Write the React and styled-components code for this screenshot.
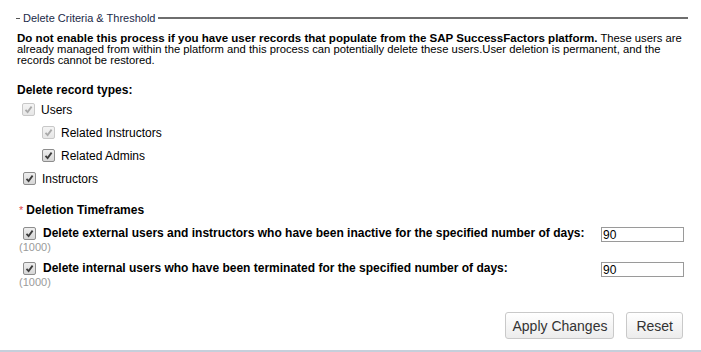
import styled, { createGlobalStyle } from "styled-components";

const Global = createGlobalStyle`
  html, body {
    margin: 0;
    padding: 0;
    background: #fff;
  }
  body {
    font-family: "Liberation Sans", Arial, sans-serif;
    font-size: 12px;
    color: #000;
  }
`;

const Page = styled.div`
  width: 701px;
  height: 352px;
  box-sizing: border-box;
  border-bottom: 2px solid #c6cfdb;
  display: flex;
  flex-direction: column;
`;

const Header = styled.div`
  display: flex;
  align-items: center;
  margin: 11px 13px 0 16px;
  height: 14px;
`;

const Dash = styled.span`
  width: 4px;
  height: 1px;
  background: #555;
`;

const Legend = styled.span`
  padding: 0 3px;
  font-size: 11px;
  color: #1b2a48;
`;

const Rule = styled.span`
  flex: 1;
  height: 2px;
  background: #6e6e6e;
`;

const Body = styled.div`
  padding: 8px 12px 0 17px;
  display: flex;
  flex-direction: column;
`;

const Intro = styled.p`
  margin: 0;
  font-size: 11.25px;
  line-height: 11px;
  b {
    font-weight: bold;
    font-size: 11.55px;
  }
`;

const SectionTitle = styled.div`
  margin-top: ${(p) => p.top}px;
  margin-bottom: ${(p) => p.bottom || 0}px;
  font-weight: bold;
  font-size: 12px;
  line-height: 14px;
  .req {
    color: #e0454a;
    font-weight: normal;
    font-size: 11px;
    margin-right: 3px;
    margin-left: 2px;
  }
`;

const CheckRow = styled.label`
  display: flex;
  align-items: center;
  height: 23px;
  padding-left: ${(p) => p.indent}px;
  gap: 6px;
  font-size: 12px;
  color: #000;
`;

const Box = styled.span`
  width: 11px;
  height: 11px;
  border: 1px solid ${(p) => (p.disabled ? "#c8c8c8" : "#8d8d8d")};
  border-radius: 2px;
  background: ${(p) =>
    p.disabled
      ? "linear-gradient(#f4f4f4, #e6e6e6)"
      : "linear-gradient(#eeeeee, #d6d6d6)"};
  display: flex;
  align-items: center;
  justify-content: center;
  flex: none;
  svg {
    display: block;
  }
`;

function Check({ disabled }) {
  return (
    <Box disabled={disabled}>
      <svg width="9" height="9" viewBox="0 0 9 9">
        <path
          d="M1.5 4.8 L3.6 7 L7.6 1.6"
          fill="none"
          stroke={disabled ? "#a9a9a9" : "#3c3c3c"}
          strokeWidth="1.8"
        />
      </svg>
    </Box>
  );
}

const TimeRow = styled.div`
  display: flex;
  align-items: center;
  justify-content: space-between;
  margin-top: ${(p) => p.top}px;
  height: 16px;
`;

const TimeLabel = styled.label`
  display: flex;
  align-items: center;
  gap: 7px;
  padding-left: 6px;
  font-weight: bold;
  font-size: 12px;
`;

const DaysInput = styled.input`
  width: 83px;
  height: 15px;
  box-sizing: border-box;
  border: 1px solid #9a9a9a;
  padding: 0 1px;
  margin: 3px 5px 0 0;
  font-family: "Liberation Sans", Arial, sans-serif;
  font-size: 12px;
  color: #000;
  outline: none;
`;

const Limit = styled.div`
  font-size: 11px;
  color: #9a9a9a;
  padding-left: 2px;
  line-height: 12px;
`;

const Actions = styled.div`
  margin-top: auto;
  display: flex;
  justify-content: flex-end;
  gap: 12px;
  padding: 0 18px 11px 0;
`;

const Button = styled.button`
  height: 27px;
  padding: 0 ${(p) => p.pad}px;
  border: 1px solid #c9c9c9;
  border-radius: 3px;
  background: linear-gradient(#ffffff, #ececec);
  font-family: "Liberation Sans", Arial, sans-serif;
  font-size: 14px;
  color: #333;
  cursor: pointer;
`;

export default function App() {
  return (
    <>
      <Global />
      <Page>
        <Header>
          <Dash />
          <Legend>Delete Criteria &amp; Threshold</Legend>
          <Rule />
        </Header>
        <Body>
          <Intro>
            <b>
              Do not enable this process if you have user records that populate
              from the SAP SuccessFactors platform.
            </b>{" "}
            These users are already managed from within the platform and this
            process can potentially delete these users.User deletion is
            permanent, and the records cannot be restored.
          </Intro>
          <SectionTitle top={17} bottom={1}>
            Delete record types:
          </SectionTitle>
          <CheckRow indent={5}>
            <Check disabled />
            Users
          </CheckRow>
          <CheckRow indent={25}>
            <Check disabled />
            Related Instructors
          </CheckRow>
          <CheckRow indent={25}>
            <Check />
            Related Admins
          </CheckRow>
          <CheckRow indent={6}>
            <Check />
            Instructors
          </CheckRow>
          <SectionTitle top={13}>
            <span className="req">*</span>Deletion Timeframes
          </SectionTitle>
          <TimeRow top={8}>
            <TimeLabel>
              <Check />
              Delete external users and instructors who have been inactive for
              the specified number of days:
            </TimeLabel>
            <DaysInput defaultValue="90" />
          </TimeRow>
          <Limit>(1000)</Limit>
          <TimeRow top={7}>
            <TimeLabel>
              <Check />
              Delete internal users who have been terminated for the specified
              number of days:
            </TimeLabel>
            <DaysInput defaultValue="90" />
          </TimeRow>
          <Limit>(1000)</Limit>
        </Body>
        <Actions>
          <Button pad={6}>Apply Changes</Button>
          <Button pad={9}>Reset</Button>
        </Actions>
      </Page>
    </>
  );
}
